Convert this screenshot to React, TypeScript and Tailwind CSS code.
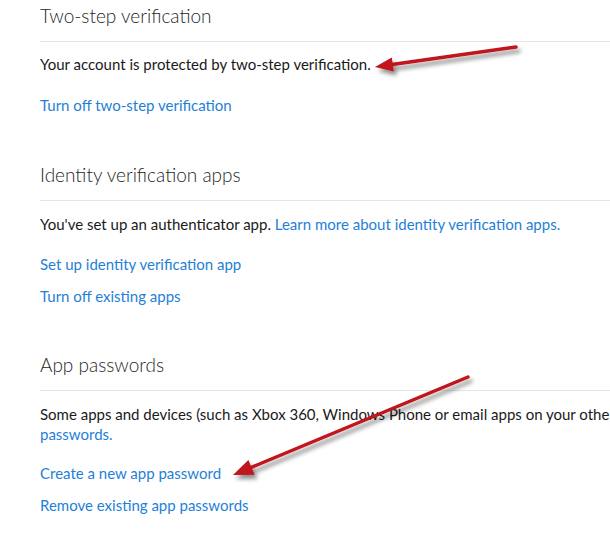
import React from "react";

function Heading({ children }: { children: React.ReactNode }) {
  return (
    <div className="border-b border-[#e5e5e5] pt-[1px] pb-[11px]">
      <h2 className="text-[19px] leading-[28px] font-light text-[#262626]">{children}</h2>
    </div>
  );
}

function Link({ children }: { children: React.ReactNode }) {
  return <a className="text-[#1f7fd7] cursor-pointer">{children}</a>;
}

function Arrows() {
  return (
    <svg className="pointer-events-none absolute inset-0" width="610" height="542" viewBox="0 0 610 542">
      <defs>
        <filter id="sh" x="-20%" y="-20%" width="140%" height="160%">
          <feDropShadow dx="3" dy="4" stdDeviation="2" floodColor="#000" floodOpacity="0.45" />
        </filter>
      </defs>
      <g filter="url(#sh)">
        <line x1="516" y1="47" x2="392" y2="64.5" stroke="#c1121c" strokeWidth="3.5" strokeLinecap="round" />
        <polygon points="375,67 393.8,71.4 391.8,57.6" fill="#c1121c" />
      </g>
      <g filter="url(#sh)">
        <line x1="468" y1="377" x2="251" y2="467.5" stroke="#c1121c" strokeWidth="3.5" strokeLinecap="round" />
        <polygon points="233,475 248.4,459.9 254.6,474.7" fill="#c1121c" />
      </g>
    </svg>
  );
}

export default function App() {
  return (
    <div className="relative h-[542px] w-[610px] overflow-hidden bg-white font-['Lato','Liberation_Sans',sans-serif] text-[15px] leading-[20px] text-[#1a1a1a]">
      <div className="pl-[40px] pt-[1px]">
        {/* Two-step verification */}
        <section>
          <Heading>Two-step verification</Heading>
          <p className="mt-[12px]">Your account is protected by two-step verification.</p>
          <div className="mt-[21px]">
            <Link>Turn off two-step verification</Link>
          </div>
        </section>

        {/* Identity verification apps */}
        <section className="mt-[45px]">
          <Heading>Identity verification apps</Heading>
          <p className="mt-[13px]">
            You've set up an authenticator app. <Link>Learn more about identity verification apps.</Link>
          </p>
          <div className="mt-[20px] flex flex-col gap-[12px]">
            <Link>Set up identity verification app</Link>
            <Link>Turn off existing apps</Link>
          </div>
        </section>

        {/* App passwords */}
        <section className="mt-[44px]">
          <Heading>App passwords</Heading>
          <p className="mt-[13px] whitespace-nowrap">
            Some apps and devices (such as Xbox 360, Windows Phone or email apps on your other devices) don't support
            security codes for two-step verification. In these cases, you need to create an app password to sign in.{" "}
            <Link>
              Learn more about app
              <br />
              passwords.
            </Link>
          </p>
          <div className="mt-[19px] flex flex-col gap-[12px]">
            <Link>Create a new app password</Link>
            <Link>Remove existing app passwords</Link>
          </div>
        </section>
      </div>
      <Arrows />
    </div>
  );
}
